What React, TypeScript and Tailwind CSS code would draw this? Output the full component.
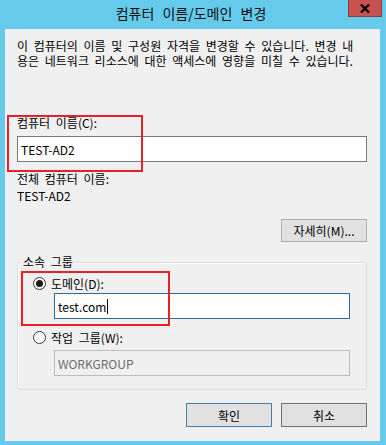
import React from "react";

const font = { fontFamily: '"Noto Sans CJK KR", sans-serif' };

function Radio({ checked }: { checked?: boolean }) {
  return (
    <span className="flex h-[13px] w-[13px] items-center justify-center rounded-full border border-[#333333] bg-white">
      {checked && <span className="h-[7px] w-[7px] rounded-full bg-[#1a1a1a]" />}
    </span>
  );
}

export default function App() {
  return (
    <div
      className="relative h-[445px] w-[386px] overflow-hidden bg-[#65caeb] text-[12px] leading-[15px] text-black [word-spacing:3px]"
      style={font}
    >
      {/* title bar */}
      <div className="relative h-[29px]">
        <div className="pt-[4px] text-center text-[14px] leading-[18px] text-[#111] [word-spacing:5px]">
          <span className="relative left-[-2px]">컴퓨터 이름/도메인 변경</span>
        </div>
        <div className="absolute left-[348px] top-0 flex h-[17px] w-[34px] items-center justify-center border-b border-l border-r border-[#8e3b3b] bg-[#c75050]">
          <svg width="10" height="9" viewBox="0 0 10 9">
            <path d="M1 0.5 L9 8.5 M9 0.5 L1 8.5" stroke="#000" strokeWidth="2.2" />
          </svg>
        </div>
      </div>

      {/* client */}
      <div className="relative ml-[5px] flex h-[412px] w-[375px] flex-col bg-[#f0f0f0]">
        <p className="pl-[12px] pt-[9px]">
          <span className="block whitespace-nowrap">이 컴퓨터의 이름 및 구성원 자격을 변경할 수 있습니다. 변경 내</span>
          <span className="block whitespace-nowrap">용은 네트워크 리소스에 대한 액세스에 영향을 미칠 수 있습니다.</span>
        </p>

        <div className="ml-[12px] mt-[47px]">컴퓨터 이름(C):</div>
        <div className="ml-[12px] mt-[6px] flex h-[26px] w-[350px] items-center border border-[#7a7a7a] bg-white pl-[3px]">
          TEST-AD2
        </div>
        <div className="ml-[12px] mt-[9px]">전체 컴퓨터 이름:</div>
        <div className="ml-[12px] mt-[2px]">TEST-AD2</div>

        <div className="mr-[13px] mt-[16px] flex h-[23px] w-[86px] items-center justify-center self-end border border-[#adadad] bg-[#e1e1e1]">
          자세히(M)...
        </div>

        {/* group box */}
        <div className="relative ml-[12px] mt-[20px] h-[128px] w-[350px] rounded-[3px] border border-[#dcdcdc] shadow-[inset_1px_1px_0_#ffffff]">
          <div className="absolute left-[3px] top-[-9px] bg-[#f0f0f0] px-[2px]">소속 그룹</div>
          <div className="flex flex-col pl-[15px] pt-[13px]">
            <div className="flex h-[15px] items-center gap-[5px]">
              <Radio checked />
              <span>도메인(D):</span>
            </div>
            <div className="ml-[21px] mt-[2px] flex h-[26px] w-[296px] items-center border border-[#2f6a9d] bg-white pl-[3px]">
              <span>test.com</span>
              <span className="ml-[1px] h-[15px] w-[1px] bg-black" />
            </div>
            <div className="mt-[11px] flex h-[15px] items-center gap-[5px]">
              <Radio />
              <span>작업 그룹(W):</span>
            </div>
            <div className="ml-[21px] mt-[5px] flex h-[26px] w-[296px] items-center border border-[#bcbcbc] bg-[#f0f0f0] pl-[3px] text-[#6d6d6d]">
              WORKGROUP
            </div>
          </div>
        </div>

        <div className="mr-[13px] mt-[13px] flex justify-end gap-[9px]">
          <div className="flex h-[24px] w-[86px] items-center justify-center border border-[#3c7fb1] bg-[#e1e1e1]">
            확인
          </div>
          <div className="flex h-[24px] w-[86px] items-center justify-center border border-[#707070] bg-[#e1e1e1]">
            취소
          </div>
        </div>

        {/* red highlight boxes */}
        <div className="pointer-events-none absolute left-[2px] top-[86px] h-[57px] w-[136px] border-2 border-[#e8202a]" />
        <div className="pointer-events-none absolute left-[16px] top-[242px] h-[55px] w-[149px] border-2 border-[#e8202a]" />
      </div>
    </div>
  );
}
